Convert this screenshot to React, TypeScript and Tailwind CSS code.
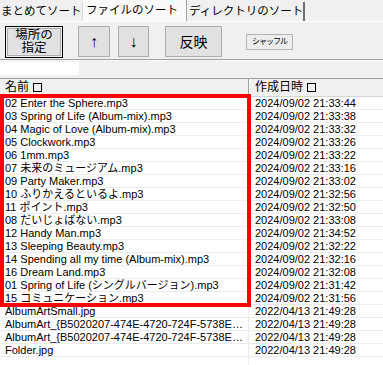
import React from 'react'

type Row = { name: string; date: string }

const rows: Row[] = [
  { name: '02 Enter the Sphere.mp3', date: '2024/09/02 21:33:44' },
  { name: '03 Spring of Life (Album-mix).mp3', date: '2024/09/02 21:33:38' },
  { name: '04 Magic of Love (Album-mix).mp3', date: '2024/09/02 21:33:32' },
  { name: '05 Clockwork.mp3', date: '2024/09/02 21:33:26' },
  { name: '06 1mm.mp3', date: '2024/09/02 21:33:22' },
  { name: '07 未来のミュージアム.mp3', date: '2024/09/02 21:33:16' },
  { name: '09 Party Maker.mp3', date: '2024/09/02 21:33:02' },
  { name: '10 ふりかえるといるよ.mp3', date: '2024/09/02 21:32:56' },
  { name: '11 ポイント.mp3', date: '2024/09/02 21:32:50' },
  { name: '08 だいじょばない.mp3', date: '2024/09/02 21:33:08' },
  { name: '12 Handy Man.mp3', date: '2024/09/02 21:34:52' },
  { name: '13 Sleeping Beauty.mp3', date: '2024/09/02 21:32:22' },
  { name: '14 Spending all my time (Album-mix).mp3', date: '2024/09/02 21:32:16' },
  { name: '16 Dream Land.mp3', date: '2024/09/02 21:32:08' },
  { name: '01 Spring of Life (シングルバージョン).mp3', date: '2024/09/02 21:31:42' },
  { name: '15 コミュニケーション.mp3', date: '2024/09/02 21:31:56' },
  { name: 'AlbumArtSmall.jpg', date: '2022/04/13 21:49:28' },
  { name: 'AlbumArt_{B5020207-474E-4720-724F-5738E…', date: '2022/04/13 21:49:28' },
  { name: 'AlbumArt_{B5020207-474E-4720-724F-5738E…', date: '2022/04/13 21:49:28' },
  { name: 'Folder.jpg', date: '2022/04/13 21:49:28' },
]

function Btn({ children, className }: { children: React.ReactNode; className: string }) {
  return (
    <div className={`flex items-center justify-center bg-[#e1e1e1] border border-[#adadad] ${className}`}>
      {children}
    </div>
  )
}

export default function App() {
  return (
    <div
      className="relative w-[383px] h-[365px] overflow-hidden bg-[#f0f0f0] text-black text-[11px] leading-[13px] whitespace-nowrap"
      style={{ fontFamily: '"Liberation Sans", "Noto Sans CJK JP", sans-serif' }}
    >
      {/* tabs */}
      <div className="flex h-[21px] items-end">
        <div className="h-[19px] w-[83px] flex items-center pl-[1px] text-[11.5px] border-r border-[#d9d9d9]">まとめてソート</div>
        <div className="h-[21px] w-[104px] flex items-center pl-[3px] text-[11.5px] bg-[#fafafa] border-r border-[#a0a0a0]">ファイルのソート</div>
        <div className="h-[19px] w-[118px] flex items-center pl-[2px] text-[11.5px] border-r-2 border-[#6e6e6e]">ディレクトリのソート</div>
      </div>
      <div className="h-[1px] bg-white" />

      {/* buttons */}
      <div className="flex items-start h-[37px] pt-[4px]">
        <div className="ml-[5px] w-[58px] h-[32px] border border-black p-[1px]">
          <div className="w-full h-full bg-[#e1e1e1] border border-[#adadad] flex flex-col items-center justify-center text-[12.5px] leading-[13px]">
            <span>場所の</span>
            <span>指定</span>
          </div>
        </div>
        <Btn className="ml-[15px] w-[32px] h-[31px] text-[16px] leading-[18px]">↑</Btn>
        <Btn className="ml-[8px] w-[31px] h-[31px] text-[16px] leading-[18px]">↓</Btn>
        <Btn className="ml-[16px] w-[57px] h-[31px] text-[14px] leading-[16px]">反映</Btn>
        <div className="ml-[24px] mt-[8px] w-[47px] h-[16px] border border-[#b5b5b5] bg-[#ededed] flex items-center justify-center text-[8px] leading-[10px] tracking-[-1px]">
          シャッフル
        </div>
      </div>

      <div className="h-[1px] bg-[#a0a0a0]" />
      <div className="h-[1px] bg-[#f8f8f8]" />
      <div className="h-[17px] pt-[1px]">
        <div className="w-[79px] h-[13px] bg-white" />
      </div>
      <div className="h-[1px] bg-[#a0a0a0]" />

      {/* list */}
      <div className="bg-white">
        <div className="flex h-[18px] bg-[#f0f0f0] border-b border-[#d5d5d5] text-[12px]">
          <div className="w-[249px] flex items-center pl-[5px] border-r border-[#a0a0a0] gap-[4px]">
            <span>名前</span>
            <span className="w-[9px] h-[9px] border border-black" />
          </div>
          <div className="flex-1 flex items-center pl-[5px] gap-[4px] border-l border-white">
            <span>作成日時</span>
            <span className="w-[9px] h-[9px] border border-black" />
          </div>
        </div>
        {rows.map((r, i) => (
          <div key={i} className="flex h-[13px] border-b border-[#ececec]">
            <div className="w-[249px] pl-[5px] pr-[2px] overflow-hidden leading-[13px] border-r border-[#ececec]">{r.name}</div>
            <div className="flex-1 pl-[6px] leading-[13px]">{r.date}</div>
          </div>
        ))}
        <div className="flex h-[20px]">
          <div className="w-[249px] border-r border-[#ececec]" />
        </div>
      </div>

      {/* red annotation box */}
      <div className="absolute left-0 top-[94px] w-[251px] h-[213px] border-4 border-[#ff0000]" />
    </div>
  )
}
